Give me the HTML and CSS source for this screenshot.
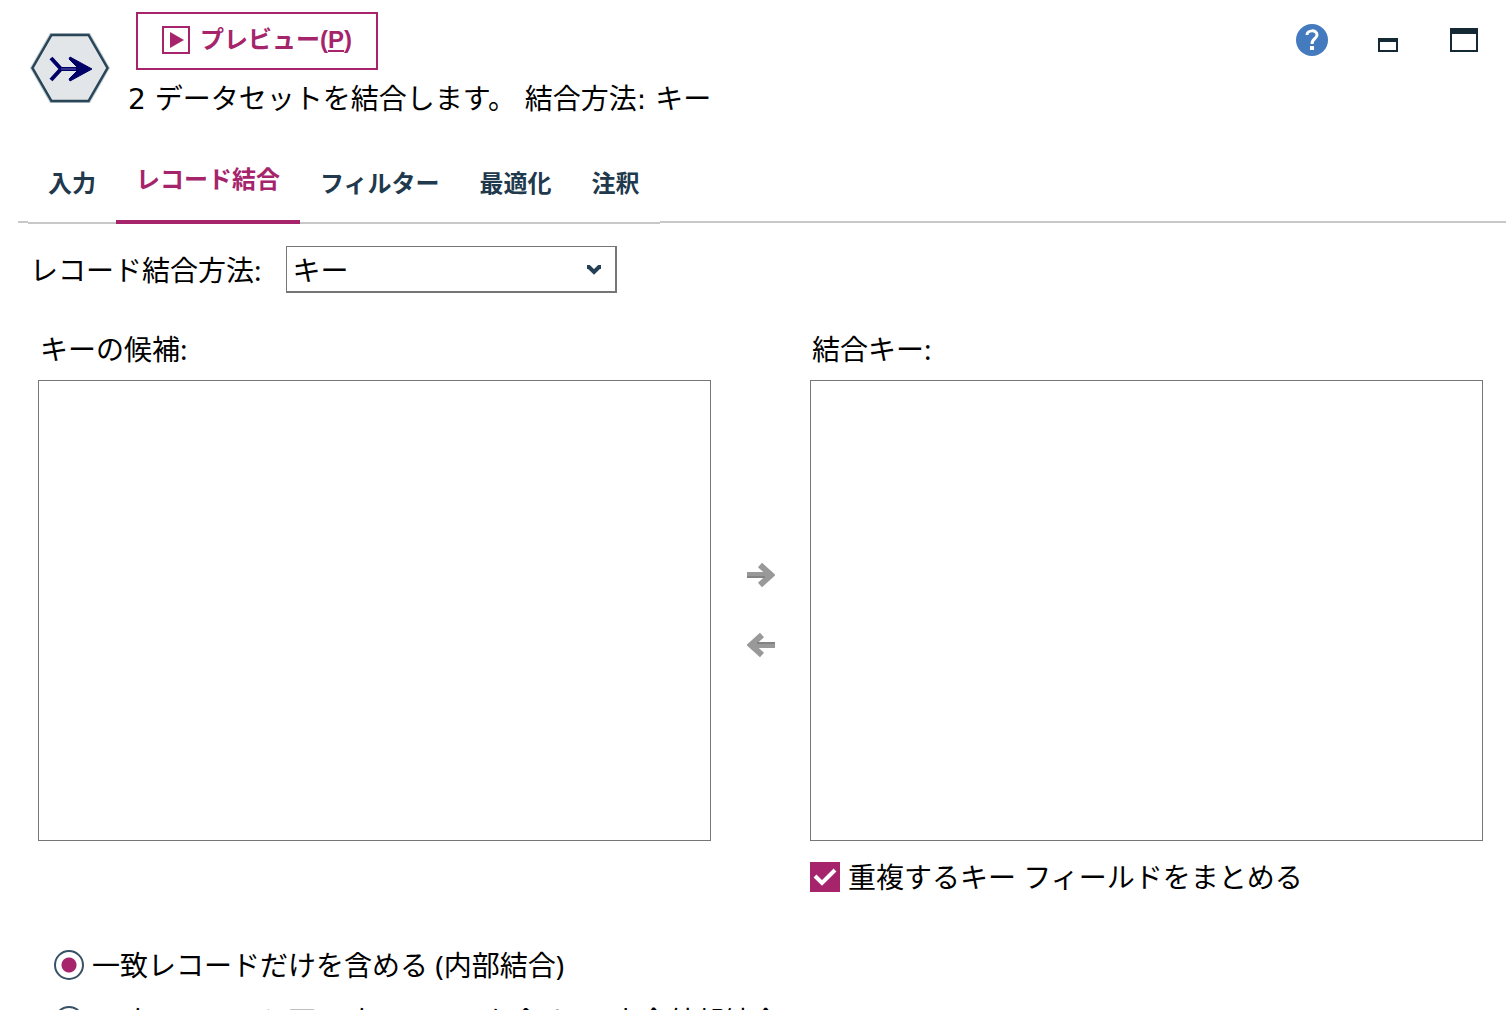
FILE: index.html
```html
<!DOCTYPE html>
<html lang="ja">
<head>
<meta charset="utf-8">
<meta name="viewport" content="width=device-width, initial-scale=1">
<title>レコード結合</title>
<link rel="stylesheet" href="styles.css">
</head>
<body>
<div class="dialog">
  <header class="header">
    <svg class="node-icon" viewBox="0 0 80 72" aria-hidden="true">
      <path d="M20 1H60L80 36L60 71H20L0 36Z" fill="#bccad1"/>
      <path d="M21.500 3H58.500L77.500 36L58.500 69H21.500L2.500 36Z" fill="#e2e6e9" stroke="#2b4558" stroke-width="2.500"/>
      <path d="M21 26L31 37L21 48M31 37H50" fill="none" stroke="#000066" stroke-width="4"/>
      <path d="M39 27L40 25L62 37L40 49L39 47L48 38V36Z" fill="#000066" stroke="#000066" stroke-width="1"/>
      <path d="M31 37H46" stroke="#33338c" stroke-width="2"/>
    </svg>
    <div class="summary">
      <button class="preview" type="button" accesskey="p">
        <svg class="preview-icon" viewBox="0 0 28 28" aria-hidden="true">
          <rect x="1" y="1" width="26" height="26" fill="none" stroke="#a5246b" stroke-width="2"/>
          <path d="M8 6L22 14L8 22Z" fill="#a5246b"/>
        </svg>
        <span>プレビュー(<u>P</u>)</span>
      </button>
      <p class="description">2 データセットを結合します。 結合方法: キー</p>
    </div>
    <div class="window-tools">
      <button class="tool" type="button" aria-label="ヘルプ">
        <svg viewBox="0 0 32 32" aria-hidden="true">
          <circle cx="16" cy="16" r="16" fill="#447bbe"/>
          <path d="M11 11C11 6 21 5 21 11C21 15 16 14 16 20" fill="none" stroke="#fff" stroke-width="3"/>
          <rect x="14" y="22" width="4" height="4" fill="#fff"/>
        </svg>
      </button>
      <button class="tool" type="button" aria-label="最小化">
        <svg viewBox="0 0 32 32" aria-hidden="true"><path d="M6 14H26V28H6ZM8 18V26H24V18Z" fill="#152935" fill-rule="evenodd"/></svg>
      </button>
      <button class="tool" type="button" aria-label="最大化">
        <svg viewBox="0 0 32 32" aria-hidden="true"><path d="M2 4H30V28H2ZM4 10V26H28V10Z" fill="#152935" fill-rule="evenodd"/></svg>
      </button>
    </div>
  </header>

  <div class="tabs" role="tablist">
    <button class="tab" type="button" role="tab">入力</button>
    <button class="tab tab-active" type="button" role="tab" aria-selected="true">レコード結合</button>
    <button class="tab" type="button" role="tab">フィルター</button>
    <button class="tab" type="button" role="tab">最適化</button>
    <button class="tab" type="button" role="tab">注釈</button>
  </div>

  <main class="panel">
    <div class="method">
      <label for="method">レコード結合方法:</label>
      <div class="dropdown">
        <select id="method"><option>キー</option></select>
        <svg class="chevron" viewBox="0 0 16 10" aria-hidden="true"><path d="M1 2H3L8 7L13 2H15" fill="none" stroke="#253f54" stroke-width="4"/></svg>
      </div>
    </div>

    <div class="keys">
      <label class="list-title" for="candidates">キーの候補:</label>
      <label class="list-title list-title-right" for="merge-keys">結合キー:</label>
      <select class="list" id="candidates" multiple></select>
      <div class="movers">
        <button class="mover" type="button" aria-label="追加" disabled>
          <svg viewBox="0 0 28 26" aria-hidden="true"><path d="M0 13H24M13 3L24 13L13 23" fill="none" stroke="#999" stroke-width="6"/><path d="M0 15H18" stroke="#838383" stroke-width="2"/></svg>
        </button>
        <button class="mover" type="button" aria-label="削除" disabled>
          <svg viewBox="0 0 28 26" aria-hidden="true"><path d="M28 13H4M15 3L4 13L15 23" fill="none" stroke="#999" stroke-width="6"/><path d="M10 11H28" stroke="#838383" stroke-width="2"/></svg>
        </button>
      </div>
      <select class="list" id="merge-keys" multiple></select>
      <label class="choice combine">
        <span class="mark">
          <input class="check" type="checkbox" checked>
          <svg class="tick" viewBox="0 0 30 30" aria-hidden="true"><path d="M5 14L12 21L25 8" fill="none" stroke="#fff" stroke-width="4"/></svg>
        </span>
        <span>重複するキー フィールドをまとめる</span>
      </label>
    </div>

    <div class="joins" role="radiogroup" aria-label="結合の種類">
      <label class="choice"><input class="radio" type="radio" name="join" checked><span>一致レコードだけを含める (内部結合)</span></label>
      <label class="choice"><input class="radio" type="radio" name="join"><span>一致レコードと不一致レコードを含める (完全外部結合)</span></label>
    </div>
  </main>
</div>
</body>
</html>
```

FILE: styles.css
```css
* {
  box-sizing: border-box;
}

body {
  margin: 0;
  background: #fff;
  color: #000;
  font: 28px/36px "Noto Sans", "Noto Sans CJK JP", sans-serif;
}

button,
select {
  margin: 0;
  padding: 0;
  border: 0;
  border-radius: 0;
  background: none;
  color: inherit;
  font: inherit;
}

svg {
  display: block;
}

.dialog {
  height: 100vh;
  overflow: hidden;
}

.header {
  display: flex;
  align-items: flex-start;
  height: 118px;
  padding: 12px 30px 0;
}

.node-icon {
  flex: none;
  width: 80px;
  height: 72px;
  margin-top: 20px;
}

.summary {
  flex: 1;
  padding-left: 18px;
}

.preview {
  display: flex;
  align-items: center;
  gap: 10px;
  height: 58px;
  margin-left: 8px;
  padding: 0 24px 2px;
  border: 2px solid #a5246b;
  color: #a5246b;
  font: bold 24px/32px "Liberation Sans", "Noto Sans CJK JP", sans-serif;
}

.preview-icon {
  width: 28px;
  height: 28px;
}

.preview u {
  text-decoration-thickness: 2px;
  text-underline-offset: 2px;
}

.description {
  margin: 12px 0 0;
  font-family: "DejaVu Sans", "Noto Sans CJK JP", sans-serif;
}

.window-tools {
  display: flex;
  gap: 44px;
  padding-top: 12px;
}

.tool {
  width: 32px;
  height: 32px;
}

.tabs {
  display: flex;
  align-items: flex-end;
  height: 106px;
  padding: 0 4px 0 18px;
}

.tabs::before,
.tabs::after {
  content: "";
  width: 10px;
  margin-bottom: 1px;
  border-bottom: 2px solid #c8c8c8;
}

.tabs::after {
  flex: 1;
}

.tab {
  padding: 0 20px 22px;
  border-bottom: 2px solid #c8c8c8;
  color: #20394d;
  font: bold 24px/36px "Noto Sans CJK JP", sans-serif;
}

.tab-active {
  padding-bottom: 24px;
  border-bottom: 4px solid #a5246b;
  color: #a5246b;
}

.method {
  display: flex;
  align-items: center;
  gap: 24px;
  padding: 22px 30px 0;
}

.dropdown {
  display: grid;
  align-items: center;
  width: 331px;
}

.dropdown select,
.chevron {
  grid-area: 1 / 1;
}

.dropdown select {
  height: 47px;
  padding: 2px 0 0 6px;
  border: solid #767676;
  border-width: 1px 2px 2px 1px;
  background: #fff;
  appearance: none;
}

.chevron {
  justify-self: end;
  width: 16px;
  height: 10px;
  margin-right: 15px;
  pointer-events: none;
}

.keys {
  display: grid;
  grid-template-columns: 1fr 99px 1fr;
  padding: 36px 27px 0 38px;
}

.list-title {
  padding: 0 2px 11px;
  line-height: 40px;
}

.list-title-right {
  grid-column: 3;
}

.list {
  width: 100%;
  height: 461px;
  border: 1px solid #767676;
  background: #fff;
}

.movers {
  display: flex;
  flex-direction: column;
  align-items: center;
  justify-content: center;
  gap: 44px;
  padding-bottom: 2px;
}

.mover {
  width: 28px;
  height: 26px;
}

.choice {
  display: flex;
  align-items: center;
  gap: 8px;
  height: 30px;
}

.combine {
  grid-column: 3;
  margin-top: 21px;
}

.mark {
  display: grid;
}

.check,
.tick {
  grid-area: 1 / 1;
  width: 30px;
  height: 30px;
}

.check {
  margin: 0;
  border: 2px solid #a5246b;
  appearance: none;
}

.check:checked {
  background: #a5246b;
}

.tick {
  visibility: hidden;
  pointer-events: none;
}

.check:checked + .tick {
  visibility: visible;
}

.joins {
  display: flex;
  flex-direction: column;
  gap: 26px;
  padding: 58px 54px 0;
}

.radio {
  width: 30px;
  height: 30px;
  margin: 0;
  border: 2px solid #385164;
  border-radius: 50%;
  appearance: none;
}

.radio:checked {
  background: radial-gradient(circle, #a5246b 7px, transparent 8px);
}
```
